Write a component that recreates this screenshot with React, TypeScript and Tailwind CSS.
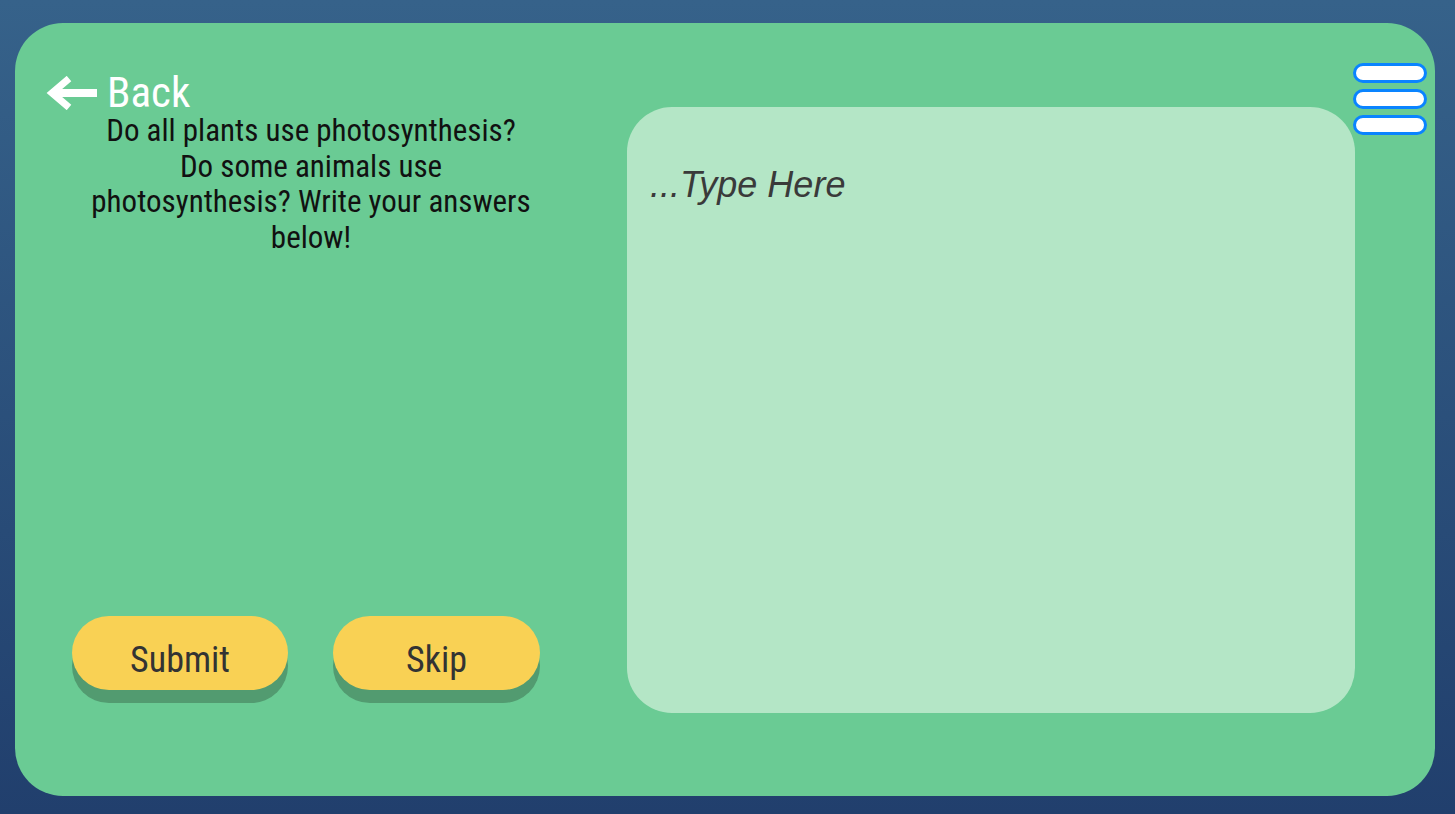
const condensed = {
  fontFamily: '"Roboto Condensed", Roboto, "Liberation Sans", sans-serif',
};

const BackArrow = () => (
  <svg width="51" height="34" viewBox="0 0 51 34" fill="none">
    <path d="M23 2.5 L6 17 L23 31.5" stroke="white" strokeWidth="7" />
    <path d="M5 17 H51" stroke="white" strokeWidth="8" />
  </svg>
);

const Bar = () => (
  <div className="h-[20px] w-[74px] rounded-full border-[3.5px] border-[#0a84ff] bg-white" />
);

export default function App() {
  return (
    <div className="min-h-screen w-full bg-linear-to-b from-[#36628a] to-[#213f6d] pt-[23px] pl-[15px]">
      <div className="relative flex h-[773px] w-[1420px] rounded-[48px] bg-[#6acb94]">
        {/* left column */}
        <div className="flex w-[612px] flex-col pt-[48px] pb-[106px]" style={condensed}>
          <button className="ml-[31px] flex items-center gap-[10px] text-[43px] leading-none text-white">
            <BackArrow />
            <span>Back</span>
          </button>
          <p className="-mt-[1px] ml-[30px] w-[532px] text-center text-[31px] leading-[35.5px] text-[#111]">
            Do all plants use photosynthesis?
            <br />
            Do some animals use
            <br />
            photosynthesis? Write your answers
            <br />
            below!
          </p>
          <div className="mt-auto ml-[57px] flex gap-[45px]">
            <button className="h-[74px] w-[216px] rounded-full bg-[#f9d154] pt-[13px] text-[36px] text-[#333] shadow-[0_13px_0_#529b70]">
              Submit
            </button>
            <button className="h-[74px] w-[207px] rounded-full bg-[#f9d154] pt-[13px] text-[36px] text-[#333] shadow-[0_13px_0_#529b70]">
              Skip
            </button>
          </div>
        </div>

        {/* answer box */}
        <div className="flex flex-1 pt-[84px] pr-[80px] pb-[83px]">
          <textarea
            placeholder="...Type Here"
            className="h-full w-full resize-none rounded-[45px] bg-[#b4e6c6] pt-[60px] pl-[23px] text-[36px] leading-none text-[#3a3a3a] outline-none placeholder:italic placeholder:text-[#3a3a3a]"
            style={{ fontFamily: '"Liberation Sans", Arial, sans-serif' }}
          />
        </div>

        {/* menu */}
        <button className="absolute top-[40px] right-[8px] flex flex-col gap-[6px]">
          <Bar />
          <Bar />
          <Bar />
        </button>
      </div>
    </div>
  );
}
